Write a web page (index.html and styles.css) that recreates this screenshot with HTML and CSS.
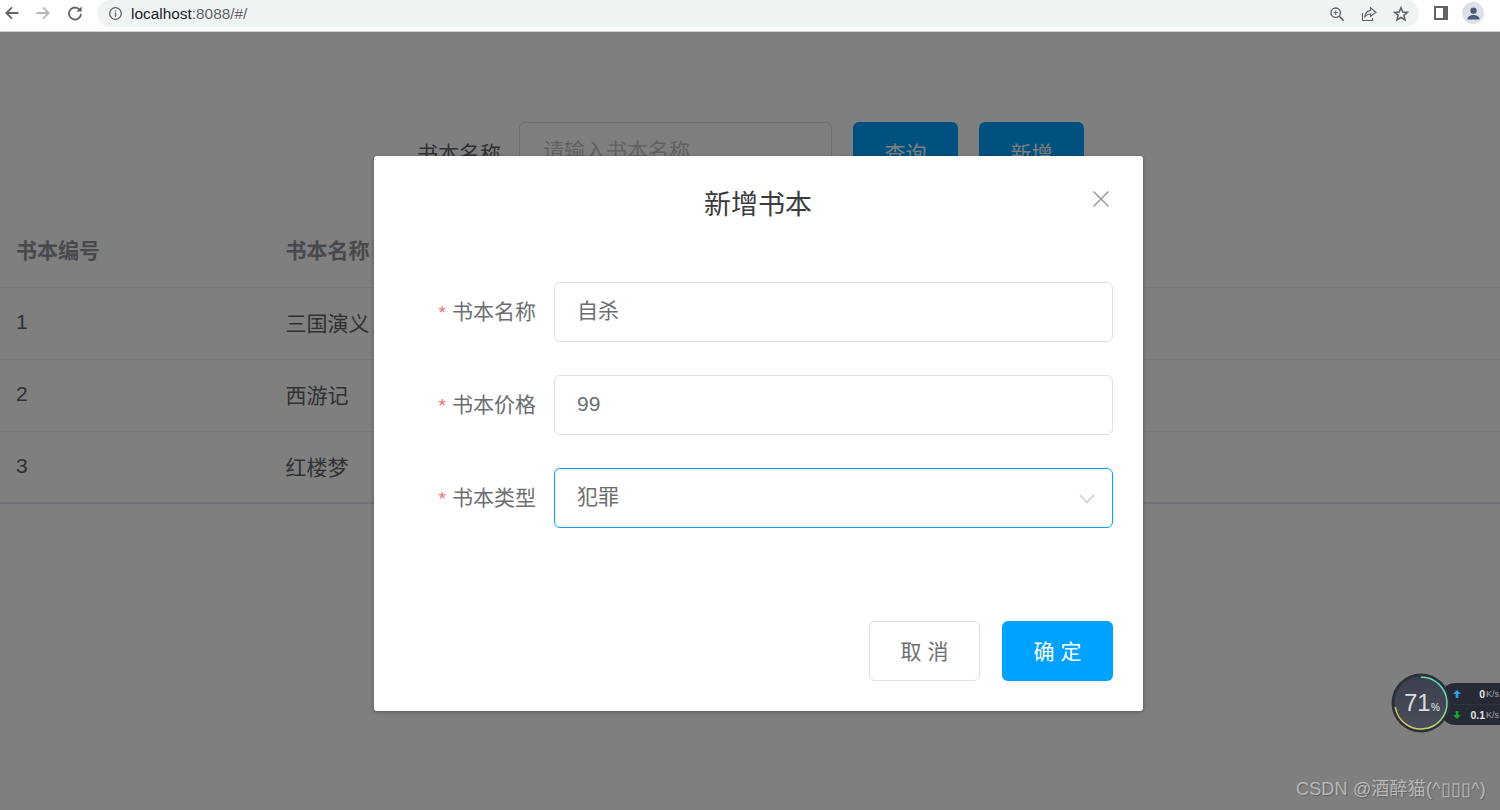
FILE: index.html
```html
<!DOCTYPE html>
<html lang="zh-CN">
<head>
<meta charset="utf-8">
<title>localhost:8088</title>
<link rel="stylesheet" href="styles.css">
</head>
<body>
<header class="chrome">
  <svg class="nav-icon" viewBox="0 0 16 16"><path d="M14.5 8H2.5M8 2.3 2.3 8 8 13.7" fill="none" stroke="#5f6368" stroke-width="1.8"/></svg>
  <svg class="nav-icon nav-forward" viewBox="0 0 16 16"><path d="M1.5 8h12M8 2.3 13.700 8 8 13.700" fill="none" stroke="#b4b6b8" stroke-width="1.8"/></svg>
  <svg class="nav-icon nav-reload" viewBox="0 0 16 16"><path d="M13 5.2A6 6 0 1 0 14 8.8" fill="none" stroke="#5f6368" stroke-width="1.8"/><path d="M14.6 1.4v5.2H9.4z" fill="#5f6368"/></svg>
  <div class="omnibox">
    <svg class="info" viewBox="0 0 16 16"><circle cx="8" cy="8" r="6.2" fill="none" stroke="#5f6368" stroke-width="1.4"/><path d="M7.3 7h1.4v4.4H7.3zM7.3 4.4h1.4v1.4H7.3z" fill="#5f6368"/></svg>
    <span class="url"><span class="url-host">localhost</span>:8088/#/</span>
    <div class="omni-actions">
      <svg class="omni-icon" viewBox="0 0 16 16"><circle cx="6.7" cy="6.7" r="4.7" fill="none" stroke="#5f6368" stroke-width="1.4"/><path d="M10.2 10.2 14.6 14.6" stroke="#5f6368" stroke-width="1.6"/><path d="M4.5 6.7h4.4M6.7 4.5v4.4" stroke="#5f6368" stroke-width="1.1"/></svg>
      <svg class="omni-icon" viewBox="0 0 16 16"><path d="M1.5 7v7.5h10V12" fill="none" stroke="#5f6368" stroke-width="1.1"/><path d="M9.5 1.8 15 6.2l-5.5 4.2V8C7 8 5 9 3.6 11.4 4 7.5 6.2 4.9 9.5 4.4z" fill="none" stroke="#5f6368" stroke-width="1.1"/></svg>
      <svg class="omni-icon" viewBox="0 0 16 16"><path d="M8 1.8 9.8 6l4.6.4-3.5 3 1.1 4.5L8 11.5l-4 2.4 1.1-4.5-3.5-3L6.200 6z" fill="none" stroke="#5f6368" stroke-width="1.6"/></svg>
    </div>
  </div>
  <svg class="panel-icon" viewBox="0 0 14 14"><path d="M0 0h14v14H0z" fill="#5f6368"/><path d="M2 2h7v10H2z" fill="#fff"/></svg>
  <div class="avatar"><svg class="avatar-icon" viewBox="0 0 14 14"><circle cx="7" cy="4" r="3.400" fill="#4a5a7a"/><path d="M0.500 13.500c0-3.400 3-5 6.500-5s6.500 1.600 6.500 5z" fill="#4a5a7a"/></svg></div>
</header>

<main class="page">
  <form class="search">
    <label class="search-label">书本名称</label>
    <div class="search-input">请输入书本名称</div>
    <button class="btn-primary" type="button">查询</button>
    <button class="btn-primary" type="button">新增</button>
  </form>
  <table class="books">
    <thead><tr><th class="col-id">书本编号</th><th>书本名称</th></tr></thead>
    <tbody>
      <tr><td>1</td><td>三国演义</td></tr>
      <tr><td>2</td><td>西游记</td></tr>
      <tr><td>3</td><td>红楼梦</td></tr>
    </tbody>
  </table>

  <div class="overlay"></div>

  <section class="dialog">
    <div class="dialog-header">
      <h2 class="dialog-title">新增书本</h2>
      <svg class="close" viewBox="0 0 16 16"><path d="M.5.5l15 15M15.500.5l-15 15" stroke="#8c9199" stroke-width="1.300"/></svg>
    </div>
    <div class="form-row">
      <label class="form-label"><span class="req">*</span>书本名称</label>
      <div class="field">自杀</div>
    </div>
    <div class="form-row">
      <label class="form-label"><span class="req">*</span>书本价格</label>
      <div class="field">99</div>
    </div>
    <div class="form-row">
      <label class="form-label"><span class="req">*</span>书本类型</label>
      <div class="field field-focus">犯罪
        <svg class="chevron" viewBox="0 0 16 10"><path d="M1 1l7 7.500L15 1" fill="none" stroke="#c9ccd3" stroke-width="1.500"/></svg>
      </div>
    </div>
    <div class="dialog-footer">
      <button class="btn btn-cancel" type="button">取 消</button>
      <button class="btn btn-ok" type="button">确 定</button>
    </div>
  </section>

  <aside class="net-widget">
    <div class="net-pill">
      <div class="net-line"><svg class="net-arrow" viewBox="0 0 8 8"><path d="M4 0 8 4H5.300v4H2.700V4H0z" fill="#2f9fe8"/></svg><span class="net-value">0</span><span class="net-unit">K/s</span></div>
      <div class="net-line"><svg class="net-arrow" viewBox="0 0 8 8"><path d="M4 8 8 4H5.300V0H2.700v4H0z" fill="#16a52c"/></svg><span class="net-value">0.1</span><span class="net-unit">K/s</span></div>
    </div>
    <div class="gauge">
      <svg class="gauge-ring" viewBox="0 0 60 60">
        <defs>
          <linearGradient id="ring" x1="1" y1="0" x2="0" y2="1"><stop offset="0" stop-color="#3fd6c4"/><stop offset=".6" stop-color="#b8dc6a"/><stop offset="1" stop-color="#f2b84a"/></linearGradient>
          <linearGradient id="disc" x1="0" y1="0" x2="0" y2="1"><stop offset="0" stop-color="#3c404e"/><stop offset="1" stop-color="#4a4e5a"/></linearGradient>
        </defs>
        <circle cx="30" cy="30" r="29.500" fill="#2c303b"/>
        <circle cx="30" cy="30" r="26.500" fill="url(#disc)"/>
        <path d="M30 4A26 26 0 1 1 4.300 34" fill="none" stroke="url(#ring)" stroke-width="1.500"/>
      </svg>
      <span class="gauge-num">71</span><span class="gauge-pct">%</span>
    </div>
  </aside>

  <div class="watermark">CSDN @酒醉猫(^▯▯▯^)</div>
</main>
</body>
</html>
```
FILE: styles.css
```css
* { box-sizing: border-box; }
html, body { margin: 0; height: 100%; overflow: hidden; }
body {
  display: flex;
  flex-direction: column;
  background: #fff;
  font-family: "Liberation Sans", "Noto Sans CJK SC", sans-serif;
  color: #606266;
}
.chrome {
  height: 32px;
  flex: none;
  display: flex;
  align-items: flex-start;
  padding: 5px 16px 0 4px;
  background: #fff;
  border-bottom: 1px solid #d0d2d4;
}
.nav-icon { width: 16px; height: 16px; margin-right: 15px; flex: none; }
.nav-forward { margin-right: 16px; }
.nav-reload { margin-right: 14px; }
.omnibox {
  width: 1323px;
  height: 27px;
  margin-top: -5px;
  padding: 0 10px 0 11px;
  display: flex;
  align-items: center;
  background: #eff3f4;
  border-radius: 14px;
}
.info { width: 15px; height: 15px; margin-right: 8px; }
.url { font-size: 15.4px; color: #5f6368; }
.url-host { color: #202124; }
.omni-actions { margin-left: auto; display: flex; gap: 16px; }
.omni-icon { width: 16px; height: 16px; }
.panel-icon { width: 14px; height: 14px; margin: 1px 0 0 15px; }
.avatar {
  width: 22px;
  height: 22px;
  margin: -3px 0 0 14px;
  border-radius: 50%;
  background: #dde1e7;
  display: flex;
  align-items: center;
  justify-content: center;
}
.avatar-icon { width: 13px; height: 13px; }

.page { position: relative; flex: 1; overflow: hidden; background: #fff; }
.search {
  display: flex;
  align-items: center;
  height: 60px;
  margin: 90px 0 0 416px;
}
.search-label { font-size: 21px; color: #606266; width: 85px; margin-right: 18px; padding: 0 0 1px 1px; }
.search-input {
  width: 313px;
  height: 60px;
  margin-right: 21px;
  padding-left: 23px;
  border: 1px solid #dcdfe6;
  border-radius: 6px;
  font-size: 21px;
  line-height: 56px;
  color: #c0c4cc;
}
.btn-primary {
  width: 105px;
  height: 60px;
  margin-right: 21px;
  padding-bottom: 2px;
  border: 0;
  border-radius: 6px;
  background: #00a2ff;
  color: #fff;
  font: inherit;
  font-size: 21px;
}
.books { width: 100%; border-collapse: collapse; margin-top: 33px; font-size: 21px; }
.books th, .books td { padding: 0 16px 3px; text-align: left; border-bottom: 1px solid #ebeef5; }
.books th { height: 72px; font-weight: 700; color: #909399; }
.books td { height: 72px; color: #606266; }
.books th + th, .books td + td { padding-left: 15.500px; }
.books tr:last-child td { height: 72px; padding-bottom: 2px; border-bottom: 2px solid #e4e7ed; }
.col-id { width: 270px; }

.overlay { position: absolute; inset: 0; background: rgba(0, 0, 0, .5); }
.dialog {
  position: absolute;
  left: 374px;
  top: 124px;
  width: 769px;
  height: 555px;
  padding: 0 30px 30px;
  background: #fff;
  border-radius: 3px;
  box-shadow: 0 1px 4px rgba(0, 0, 0, .3);
}
.dialog-header { position: relative; height: 126px; padding-top: 30px; }
.dialog-title {
  margin: 0;
  text-align: center;
  font-size: 27px;
  font-weight: 400;
  line-height: 38px;
  color: #3a3b3e;
  padding-right: 1px;
}
.close { position: absolute; right: 4px; top: 35px; width: 16px; height: 16px; }
.form-row { display: flex; align-items: center; height: 60px; margin-bottom: 33px; }
.form-label {
  width: 133px;
  margin-left: -1px;
  margin-right: 18px;
  padding-bottom: 4px;
  text-align: right;
  font-size: 21px;
  white-space: nowrap;
  color: #6c6e72;
}
.req { color: #f56c6c; margin-right: 6px; font-size: 19px; }
.field {
  position: relative;
  flex: 1;
  height: 60px;
  padding-left: 22px;
  border: 1px solid #dcdfe6;
  border-radius: 6px;
  font-size: 21px;
  line-height: 56px;
  color: #6c6e72;
}
.field-focus { border-color: #00a2ff; }
.chevron { position: absolute; right: 17px; top: 25px; width: 16px; height: 10px; }
.dialog-footer { display: flex; justify-content: flex-end; gap: 22px; margin-top: 93px; }
.btn {
  width: 111px;
  height: 60px;
  padding-bottom: 3px;
  border-radius: 6px;
  font: inherit;
  font-size: 21px;
  white-space: pre;
}
.btn-cancel { background: #fff; border: 1px solid #dcdfe6; color: #6c6e72; }
.btn-ok { background: #00a2ff; border: 0; color: #fff; }

.net-widget { position: absolute; left: 1391px; top: 641px; width: 109px; height: 60px; }
.net-pill {
  position: absolute;
  left: 50px;
  top: 10px;
  width: 59px;
  height: 42px;
  padding-left: 12px;
  border-radius: 14px 0 0 14px;
  background: #262a35;
}
.net-line { display: flex; align-items: center; height: 21px; color: #e6e6e6; }
.net-line + .net-line { border-top: 1px solid #30343f; }
.net-arrow { width: 8px; height: 8px; margin-right: auto; }
.net-value { font-size: 10.500px; font-weight: 700; }
.net-unit { font-size: 9px; color: #a5a8ae; margin-left: 1px; width: 14px; overflow: hidden; white-space: nowrap; }
.gauge { position: absolute; left: 0; top: 0; width: 60px; height: 60px; }
.gauge-ring { position: absolute; inset: 0; }
.gauge-num { position: absolute; left: 13px; top: 17px; font-size: 24px; line-height: 26px; color: #dcdde0; }
.gauge-pct { position: absolute; left: 40px; top: 29px; font-size: 10px; line-height: 12px; color: #e8e8e8; }
.watermark {
  position: absolute;
  left: 1296px;
  top: 745px;
  font-size: 18px;
  line-height: 24px;
  letter-spacing: .18px;
  white-space: nowrap;
  color: rgba(255, 255, 255, .5);
  text-shadow: 1px 1px 1px rgba(0, 0, 0, .25);
}
```
